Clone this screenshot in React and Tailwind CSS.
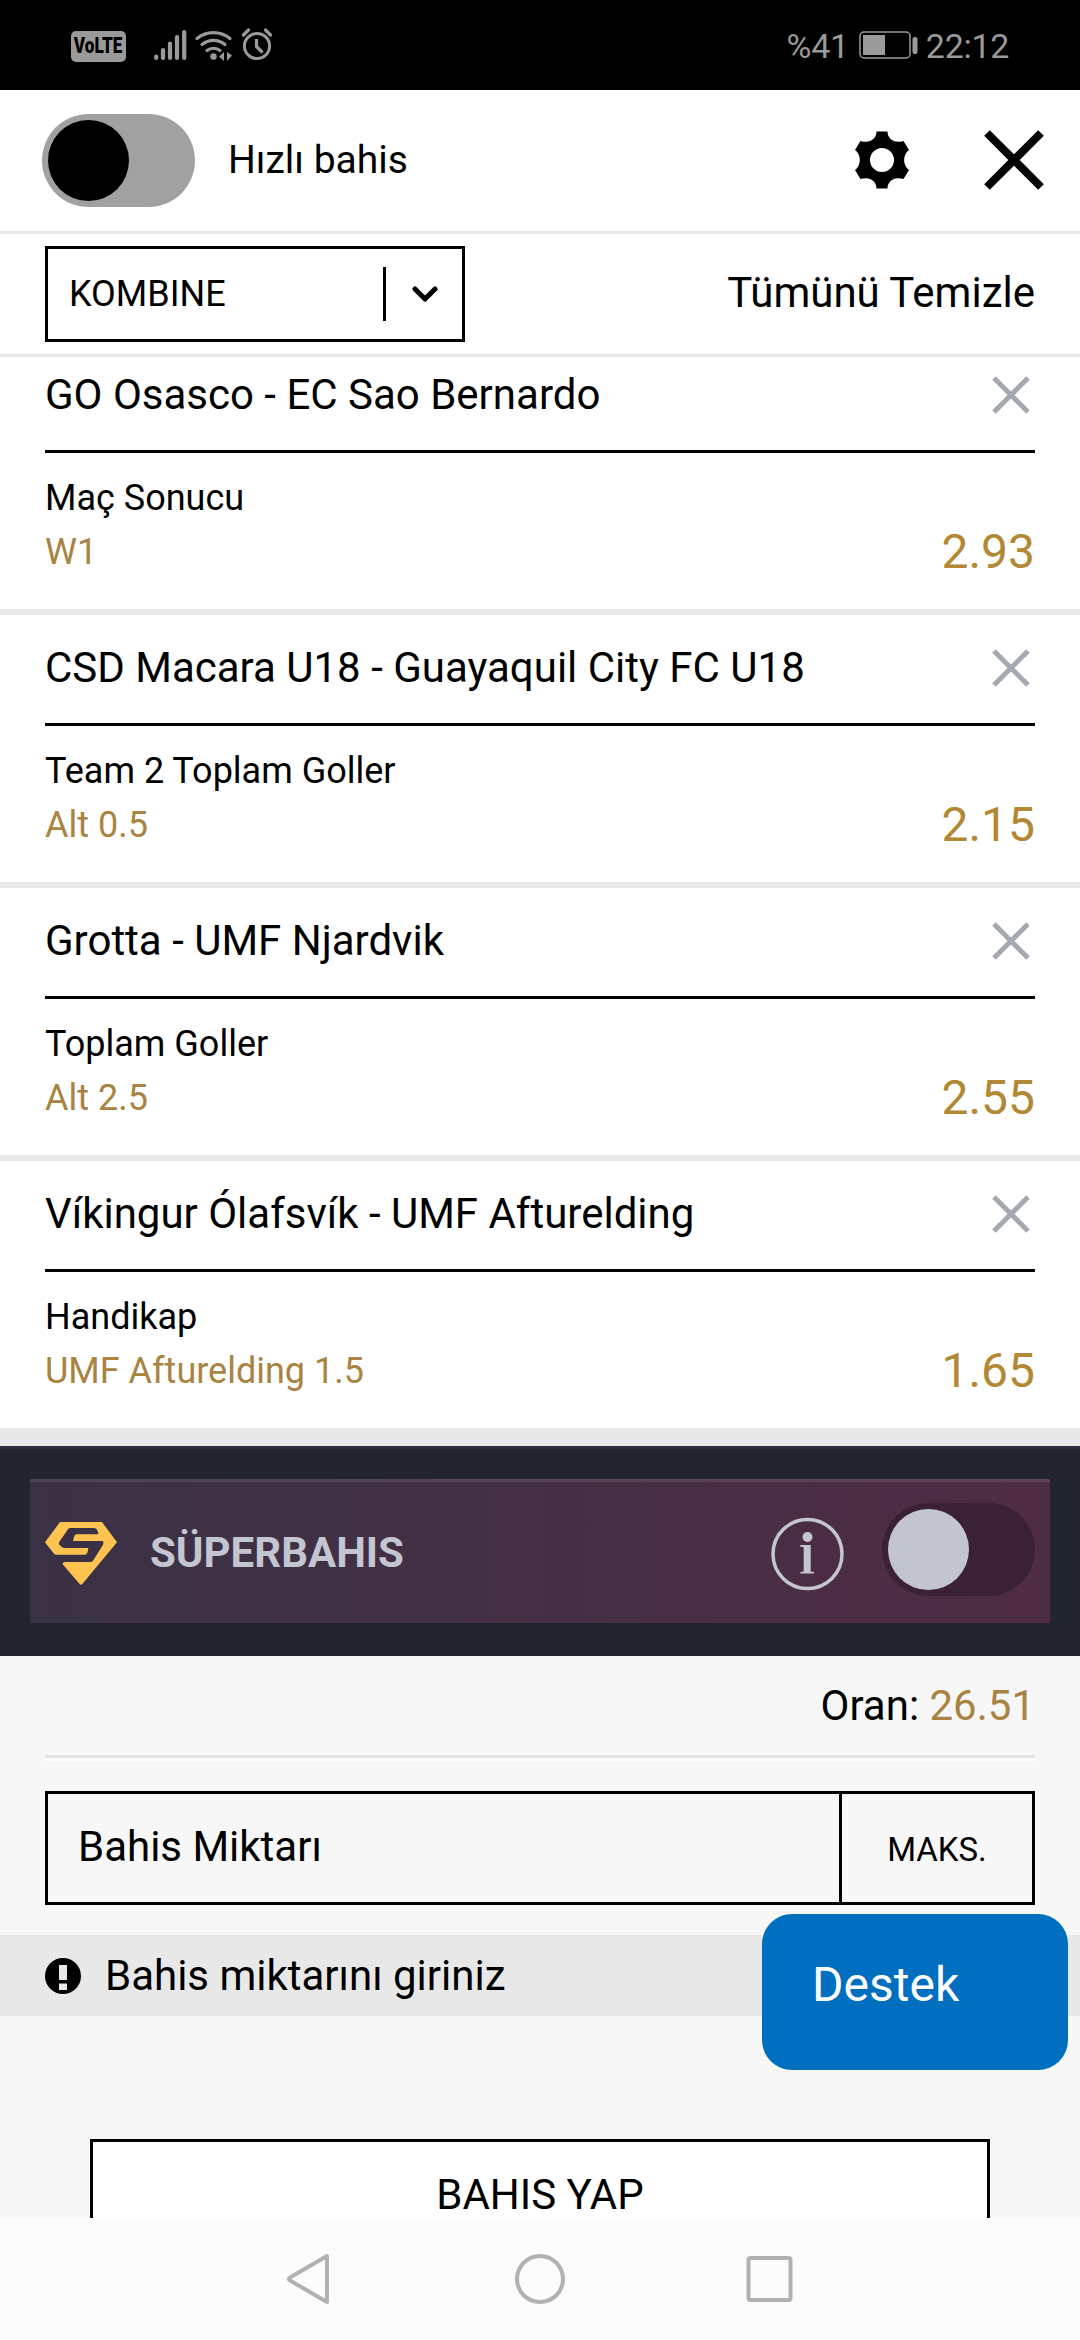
import React from "react";

const bets = [
  { match: "GO Osasco - EC Sao Bernardo", market: "Maç Sonucu", pick: "W1", odds: "2.93" },
  { match: "CSD Macara U18 - Guayaquil City FC U18", market: "Team 2 Toplam Goller", pick: "Alt 0.5", odds: "2.15" },
  { match: "Grotta - UMF Njardvik", market: "Toplam Goller", pick: "Alt 2.5", odds: "2.55" },
  { match: "Víkingur Ólafsvík - UMF Afturelding", market: "Handikap", pick: "UMF Afturelding 1.5", odds: "1.65" },
];

function StatusBar() {
  return (
    <div className="flex h-[90px] shrink-0 items-center bg-black pl-[71px] pr-[71px] text-[#9a9a9a]">
      <div className="mt-[2px] flex h-[31px] w-[55px] items-center justify-center rounded-[5px] bg-[#9a9a9a]">
        <span className="scale-x-[0.78] scale-y-[1.04] whitespace-nowrap text-[22px] font-black leading-[30px] text-black">VoLTE</span>
      </div>
      <svg className="ml-[27px]" width="122" height="34" viewBox="0 0 122 34" fill="none" stroke="#9a9a9a">
        <g strokeWidth="4.2" strokeLinecap="round">
          <path d="M3.2 28.5v1.5M10 22v8M17 15.5V30M24 9v21M31.2 4v26" />
        </g>
        <g strokeWidth="3.2" strokeLinecap="round">
          <path d="M44 10.5a26 26 0 0 1 33 0M49 16.5a18 18 0 0 1 23 0M54 22.5a10.5 10.5 0 0 1 13 0" />
        </g>
        <circle cx="60.5" cy="28.5" r="3.2" fill="#9a9a9a" stroke="none" />
        <path d="M71 24v9l-5-4.500zM74 24v9l5-5.500z" fill="#9a9a9a" stroke="none" />
        <circle cx="104" cy="18" r="12.600" strokeWidth="3" />
        <path d="M103.500 11v7.500l6 6" strokeWidth="3.200" />
        <path d="M90.500 7l5-5M117.500 7l-5-5" strokeWidth="3.200" strokeLinecap="round" />
      </svg>
      <div className="ml-auto flex items-center text-[34px] leading-none tracking-[-0.3px]">
        <span className="mt-[2px]">%41</span>
        <svg className="ml-[10px]" width="59" height="28" viewBox="0 0 59 28">
          <rect x="1" y="1" width="50" height="26" rx="4" fill="none" stroke="#9a9a9a" strokeWidth="1.500" />
          <rect x="4" y="4" width="22" height="20" fill="#9a9a9a" />
          <rect x="53.500" y="6" width="5" height="17" rx="2" fill="#9a9a9a" />
        </svg>
        <span className="ml-[8px] mt-[2px]">22:12</span>
      </div>
    </div>
  );
}

function Header() {
  return (
    <header className="flex h-[144px] shrink-0 items-center border-b-[3px] border-[#e8e8e8] bg-white pl-[42px] pr-[36px]">
      <div className="flex h-[93px] w-[153px] items-center rounded-full bg-[#a1a1a1] pl-[6px]">
        <div className="h-[81px] w-[81px] rounded-full bg-black" />
      </div>
      <span className="ml-[33px] text-[39px]">Hızlı bahis</span>
      <svg className="-mt-[2px] ml-auto" width="56" height="60" viewBox="0 0 56 60">
        <path fillRule="evenodd" d="M22.500 1.500h11c0 7 6.500 12.500 16 9.500l5.500 9c-6.500 5-6.500 15 0 20l-5.500 9c-9.500-3-16 2.500-16 9.500h-11c0-7-6.500-12.500-16-9.500l-5.500-9c6.500-5 6.500-15 0-20l5.500-9c9.500 3 16-2.500 16-9.500zM28 18a12 12 0 1 0 0 24a12 12 0 1 0 0-24z" />
      </svg>
      <svg className="-mt-[2px] ml-[74px]" width="60" height="60" viewBox="0 0 60 60" stroke="#000" strokeWidth="8">
        <path d="M3 3l54 54M57 3L3 57" />
      </svg>
    </header>
  );
}

function BetRow({ bet }) {
  return (
    <article className="h-[273px] shrink-0 px-[45px] pt-[3px]">
      <div className="flex h-[108px] items-center justify-between border-b-[3px] border-black pb-[5px]">
        <h2 className="-mt-[1px] text-[42px]">{bet.match}</h2>
        <svg className="mr-[5px]" width="38" height="38" viewBox="0 0 38 38" stroke="#a4a8b0" strokeWidth="5">
          <path d="M2 2l34 34M36 2L2 36" />
        </svg>
      </div>
      <div className="flex justify-between pt-[18px] text-[36px] leading-[54px]">
        <div>
          <p>{bet.market}</p>
          <p className="text-[#a98342]">{bet.pick}</p>
        </div>
        <span className="mt-[54px] text-[48px] text-[#b28834]">{bet.odds}</span>
      </div>
    </article>
  );
}

function SuperBet() {
  return (
    <section className="h-[210px] shrink-0 border-t-[3px] border-[#2d303d] bg-[#222530] px-[30px] pt-[30px]">
      <div className="flex h-[144px] items-center border-t-[3px] border-white/10 bg-linear-to-r from-[#3a3145] to-[#4f2c45] bg-origin-border pl-[15px] pr-[15px]">
        <svg className="mt-[2px]" width="72" height="63" viewBox="15 36 216 189">
          <path fill="#ffc352" d="M60 36H186L231 97L127 222Q123 227 119 222L68 163Q67 156 74 156H152Q156 156 159 152L189 104Q193 93 186 93H101Q99 93 100 89Q103 73 110 73H175Q173 54 162 54H90Q86 54 84 58L58 95Q56 100 58 104L66 112Q69 114 74 114H145Q143 134 135 134H48Q44 134 42 131L15 97Z" />
        </svg>
        <span className="ml-[33px] text-[42px] font-bold text-[#c3c5d0]">SÜPERBAHIS</span>
        <svg className="ml-auto mt-[2px]" width="73" height="74" viewBox="0 0 73 74" fill="#c3c5d0">
          <circle cx="36.500" cy="37" r="34.500" fill="none" stroke="#c3c5d0" strokeWidth="3.500" />
          <circle cx="36.500" cy="20" r="5" />
          <path d="M29.300 28H39.700V54.500L43 55V56.500H29.300V55L32.700 54.500V30.300L29.300 29.800z" />
        </svg>
        <div className="-mt-[7px] ml-[38px] flex h-[93px] w-[153px] items-center rounded-full bg-[#3b2135] pl-[6px]">
          <div className="h-[81px] w-[81px] rounded-full bg-[#c2c5cf]" />
        </div>
      </div>
    </section>
  );
}

function NavBar() {
  return (
    <nav className="flex h-[122px] shrink-0 items-center justify-center gap-[178px] bg-[#fcfcfc]">
      <svg width="52" height="52" viewBox="0 0 52 52" fill="none" stroke="#b1b1b1" strokeWidth="4" strokeLinejoin="round">
        <path d="M43 3v46L6 27.500q-2-1.500 0-3z" />
      </svg>
      <svg width="52" height="52" viewBox="0 0 52 52" fill="none" stroke="#b1b1b1" strokeWidth="4">
        <circle cx="26" cy="26" r="23" />
      </svg>
      <svg width="52" height="52" viewBox="0 0 52 52" fill="none" stroke="#b1b1b1" strokeWidth="4">
        <rect x="4.500" y="5" width="42" height="42" rx="2" />
      </svg>
    </nav>
  );
}

export default function App() {
  return (
    <div className="relative flex h-[2340px] w-[1080px] flex-col overflow-hidden bg-[#f7f7f7] font-[Roboto,sans-serif] text-black">
      <StatusBar />
      <Header />
      <div className="flex h-[123px] shrink-0 items-center justify-between border-b-[3px] border-[#e8e8e8] bg-white px-[45px]">
        <div className="flex h-[96px] w-[420px] items-center border-[3px] border-black pl-[21px]">
          <span className="text-[36px]">KOMBINE</span>
          <div className="ml-auto h-[54px] w-[3px] bg-black" />
          <svg className="ml-[26px] mr-[24px]" width="26" height="18" viewBox="0 0 26 18" fill="none" stroke="#000" strokeWidth="5" strokeLinecap="round" strokeLinejoin="round">
            <path d="M3 4l10 10L23 4" />
          </svg>
        </div>
        <span className="-mt-[3px] text-[42px]">Tümünü Temizle</span>
      </div>
      <main className="flex h-[1089px] shrink-0 flex-col overflow-hidden border-b-[18px] border-[#e8e8e8] bg-white">
        <div className="-mt-[15px] flex flex-col divide-y-[6px] divide-[#e8e8e8]">
          {bets.map((bet) => (
            <BetRow key={bet.match} bet={bet} />
          ))}
        </div>
      </main>
      <SuperBet />
      <section className="mx-[45px] flex h-[105px] shrink-0 items-center justify-end border-b-[3px] border-white pb-[3px] text-[42px] shadow-[inset_0_-3px_0_#e3e3e3]">
        <span className="whitespace-pre">Oran: </span>
        <span className="text-[#a98342]">26.51</span>
      </section>
      <div className="mx-[45px] mt-[30px] flex h-[114px] shrink-0 border-[3px] border-black">
        <div className="flex flex-1 items-center pb-[3px] pl-[30px] text-[42px]">Bahis Miktarı</div>
        <div className="flex w-[193px] items-center justify-center border-l-[3px] border-black pt-[4px] text-[33px]">MAKS.</div>
      </div>
      <div className="mt-[30px] flex h-[81px] shrink-0 items-center bg-[#e8e8e8] pl-[45px] text-[42px]">
        <svg width="36" height="36" viewBox="0 0 36 36">
          <circle cx="18" cy="18" r="18" />
          <path d="M14 7h8v15h-8zM14 25.500h8V32h-8z" fill="#e8e8e8" />
        </svg>
        <span className="ml-[24px]">Bahis miktarını giriniz</span>
      </div>
      <div className="mx-[90px] mt-[123px] h-[79px] shrink-0 border-[3px] border-b-0 border-black bg-white pt-[28px] text-center text-[42px] leading-[50px]">
        BAHIS YAP
      </div>
      <NavBar />
      <button className="absolute left-[762px] top-[1914px] flex h-[156px] w-[306px] items-center rounded-[30px] bg-[#006fc0] pb-[14px] pl-[50px] text-[48px] text-white">
        Destek
      </button>
    </div>
  );
}
